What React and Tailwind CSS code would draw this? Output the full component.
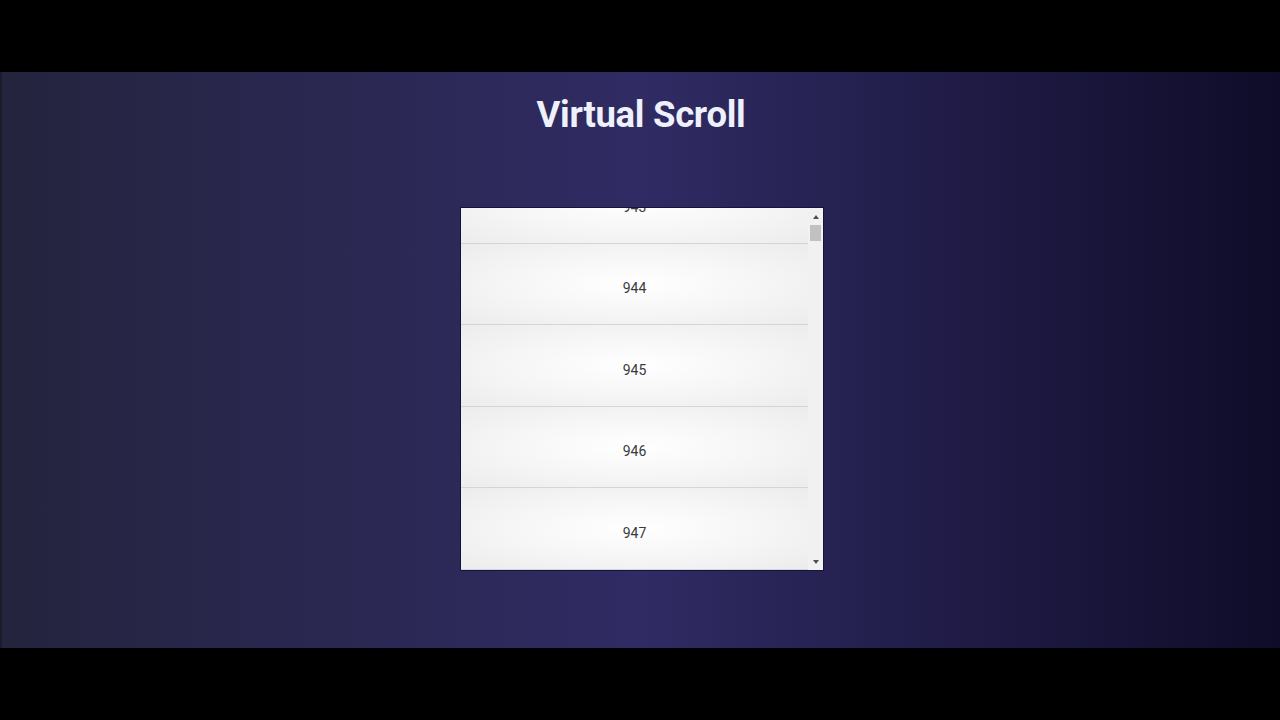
import React from "react";

const rows = [943, 944, 945, 946, 947, 948];

export default function App() {
  return (
    <div className="w-[1280px] h-[720px] bg-black flex flex-col" style={{ fontFamily: "Roboto, 'Noto Sans', sans-serif" }}>
      <div className="h-[72px] shrink-0" />
      <div className="h-[576px] shrink-0 flex flex-col items-center bg-[linear-gradient(to_right,#24243e,#302b63,#0f0c29)] border-l-2 border-[#1b1b2b]">
        <h1 className="mt-[21px] text-[36.5px] leading-[44px] font-bold text-[#eef0fb] tracking-[-0.3px]">Virtual Scroll</h1>
        <div className="mt-[70px] ml-[2px] w-[364px] h-[364px] border border-[#16133a] bg-[#f1f1f1] flex">
          <div className="w-[347px] h-full overflow-hidden">
            <div className="mt-[-46px]">
              {rows.map((n) => (
                <div
                  key={n}
                  className="h-[81.5px] pt-[10px] flex items-center justify-center border-b-[1.5px] border-[#d5d3e0] bg-[radial-gradient(ellipse_at_center,#ffffff_0%,#f6f6f6_50%,#ececec_100%)] text-[14px] text-[#3a3a3a]"
                >
                  {n}
                </div>
              ))}
            </div>
          </div>
          <div className="w-[15px] h-full bg-[#f1f1f1] flex flex-col items-center">
            <div className="h-[17px] w-full flex items-center justify-center">
              <div className="w-0 h-0 border-l-[3.5px] border-r-[3.5px] border-b-[4px] border-l-transparent border-r-transparent border-b-[#505050]" />
            </div>
            <div className="w-[11px] h-[16px] bg-[#c1c1c1]" />
            <div className="flex-1" />
            <div className="h-[17px] w-full flex items-center justify-center">
              <div className="w-0 h-0 border-l-[3.5px] border-r-[3.5px] border-t-[4px] border-l-transparent border-r-transparent border-t-[#505050]" />
            </div>
          </div>
        </div>
      </div>
      <div className="flex-1" />
    </div>
  );
}
